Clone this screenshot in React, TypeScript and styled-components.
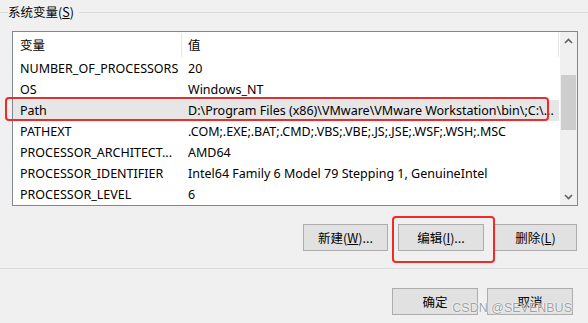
import React from 'react'
import styled, { createGlobalStyle } from 'styled-components'

const GlobalStyle = createGlobalStyle`
  html, body {
    margin: 0;
    padding: 0;
    background: #f0f0f0;
  }
  body {
    width: 588px;
    height: 323px;
    overflow: hidden;
    font-family: 'Noto Sans', 'Noto Sans CJK SC', sans-serif;
    font-size: 12.5px;
    color: #000;
  }
`

const Page = styled.div`
  width: 588px;
  height: 323px;
  display: flex;
  flex-direction: column;
`

const Group = styled.fieldset`
  margin: 2px 0 0 0;
  padding: 9px 10px 17px 12px;
  border: none;
  border-top: 1px solid #dcdcdc;
  border-bottom: 1px solid #dcdcdc;
  min-width: 0;
`

const Legend = styled.legend`
  margin-left: -4px;
  padding: 0 5px 0 0;
  line-height: 20px;
  font-family: 'Noto Sans CJK SC', sans-serif;
`

const ListBox = styled.div`
  position: relative;
  height: 175px;
  box-sizing: border-box;
  border: 1px solid #828790;
  background: #fff;
  display: flex;
`

const ListBody = styled.div`
  flex: 1;
  min-width: 0;
  display: flex;
  flex-direction: column;
`

const Row = styled.div<{ $selected?: boolean }>`
  position: relative;
  display: grid;
  grid-template-columns: 169px 1fr;
  height: 21px;
  align-items: center;
  background: ${({ $selected }) => ($selected ? '#e6e6e6' : 'transparent')};
`

const HeaderRow = styled(Row)`
  height: 25.5px;
  align-items: stretch;
`

const HeadCell = styled.div<{ $first?: boolean }>`
  display: flex;
  align-items: center;
  padding-left: ${({ $first }) => ($first ? '7px' : '6px')};
  margin: 1px 0 1px;
  border-right: 1px solid #e5e5e5;
  font-family: 'Noto Sans CJK SC', sans-serif;
`

const Cell = styled.div<{ $first?: boolean }>`
  padding-left: ${({ $first }) => ($first ? '7px' : '6px')};
  padding-right: 2px;
  white-space: nowrap;
  overflow: hidden;
  text-overflow: ellipsis;
  line-height: 21px;
`

const Callout = styled.div`
  position: absolute;
  border: 2px solid #f02a26;
  border-radius: 4px;
  pointer-events: none;
`

const PathCallout = styled(Callout)`
  left: -8px;
  right: 10px;
  top: -3px;
  bottom: 0;
`

const ButtonCallout = styled(Callout)`
  left: -6px;
  right: -11px;
  top: -8px;
  bottom: -12px;
`

const ScrollBar = styled.div`
  width: 17px;
  margin-left: 1px;
  display: flex;
  flex-direction: column;
  background: #f0f0f0;
`

const ScrollArrow = styled.div`
  height: 17px;
  display: flex;
  align-items: center;
  justify-content: center;
`

const ScrollTrack = styled.div`
  flex: 1;
  padding-top: 26px;
`

const ScrollThumb = styled.div`
  height: 55px;
  margin: 0 1px;
  background: #cdcdcd;
`

const ButtonRow = styled.div`
  display: flex;
  justify-content: flex-end;
  gap: 10px;
  margin: 18px 1px 0 0;
`

const Button = styled.div<{ $width?: number }>`
  width: ${({ $width }) => $width ?? 86}px;
  height: 27px;
  box-sizing: border-box;
  border: 1px solid #adadad;
  background: #e1e1e1;
  display: flex;
  align-items: center;
  justify-content: center;
  font-family: 'Noto Sans CJK SC', sans-serif;
  font-size: 12.5px;
`

const Wrap = styled.div`
  position: relative;
`

const BottomBar = styled.div`
  position: relative;
  display: flex;
  justify-content: flex-end;
  gap: 9px;
  margin-top: 19px;
  padding-right: 15px;
`

const Watermark = styled.div`
  position: absolute;
  right: 16px;
  top: 13px;
  font-family: 'Liberation Sans', Arial, sans-serif;
  font-size: 12.5px;
  line-height: 14px;
  color: rgba(130, 130, 130, 0.75);
  text-shadow: 0 0 1px #fff, 0 0 2px #fff;
  pointer-events: none;
`

const Chevron = ({ up }: { up?: boolean }) => (
  <svg width="9" height="6" viewBox="0 0 9 6">
    <polyline
      points={up ? '1,5 4.5,1.5 8,5' : '1,1 4.5,4.5 8,1'}
      fill="none"
      stroke="#606060"
      strokeWidth="1.6"
    />
  </svg>
)

const rows = [
  ['NUMBER_OF_PROCESSORS', '20'],
  ['OS', 'Windows_NT'],
  ['Path', 'D:\\Program Files (x86)\\VMware\\VMware Workstation\\bin\\;C:\\...'],
  ['PATHEXT', '.COM;.EXE;.BAT;.CMD;.VBS;.VBE;.JS;.JSE;.WSF;.WSH;.MSC'],
  ['PROCESSOR_ARCHITECT...', 'AMD64'],
  ['PROCESSOR_IDENTIFIER', 'Intel64 Family 6 Model 79 Stepping 1, GenuineIntel'],
  ['PROCESSOR_LEVEL', '6'],
]

export default function App() {
  return (
    <Page>
      <GlobalStyle />
      <Group>
        <Legend>
          系统变量(<u>S</u>)
        </Legend>
        <ListBox>
          <ListBody>
            <HeaderRow>
              <HeadCell $first>变量</HeadCell>
              <HeadCell>值</HeadCell>
            </HeaderRow>
            {rows.map(([name, value]) => (
              <Row key={name} $selected={name === 'Path'}>
                <Cell $first>{name}</Cell>
                <Cell>{value}</Cell>
                {name === 'Path' && <PathCallout />}
              </Row>
            ))}
          </ListBody>
          <ScrollBar>
            <ScrollArrow>
              <Chevron up />
            </ScrollArrow>
            <ScrollTrack>
              <ScrollThumb />
            </ScrollTrack>
            <ScrollArrow>
              <Chevron />
            </ScrollArrow>
          </ScrollBar>
        </ListBox>
        <ButtonRow>
          <Button $width={85}>
            新建(<u>W</u>)...
          </Button>
          <Wrap>
            <Button>
              编辑(<u>I</u>)...
            </Button>
            <ButtonCallout />
          </Wrap>
          <Button $width={83}>
            删除(<u>L</u>)
          </Button>
        </ButtonRow>
      </Group>
      <BottomBar>
        <Button>确定</Button>
        <Button>取消</Button>
        <Watermark>CSDN @SEVENBUS</Watermark>
      </BottomBar>
    </Page>
  )
}
